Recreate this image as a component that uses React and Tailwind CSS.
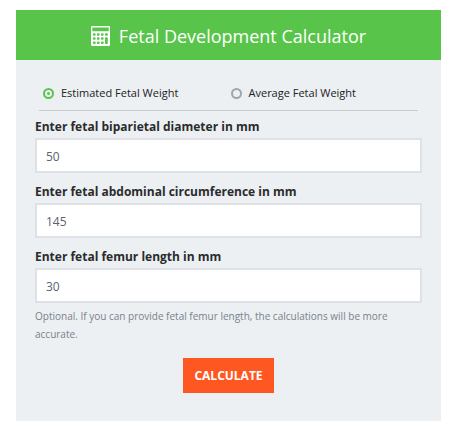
import { useState } from "react";

function CalculatorIcon() {
  return (
    <svg viewBox="0 0 19 20" width="19" height="20" aria-hidden="true">
      <path
        fill="currentColor"
        fillRule="evenodd"
        d="M1.2 0H17.8A1.2 1.2 0 0 1 19 1.2V18.8A1.2 1.2 0 0 1 17.8 20H1.2A1.2 1.2 0 0 1 0 18.8V1.2A1.2 1.2 0 0 1 1.2 0ZM1.3 1.5V5.2H17.7V1.5Z"
      />
      <g fill="#58c54a">
        {[7.2, 11.2, 15.4].map((y) =>
          [2, 6, 10].map((x) => (
            <rect key={x + "-" + y} x={x} y={y} width="2.6" height="2.6" rx="0.8" />
          ))
        )}
        <rect x="14" y="7.2" width="2.8" height="2.6" rx="0.8" />
        <rect x="14" y="11.2" width="2.8" height="6.8" rx="0.8" />
      </g>
    </svg>
  );
}

function Mode({ label, value, mode, onChange }) {
  return (
    <label className="flex flex-1 items-center gap-[7px] text-[11px] text-[#222]">
      <input
        type="radio"
        name="mode"
        value={value}
        checked={mode === value}
        onChange={() => onChange(value)}
        className="grid size-[11px] shrink-0 appearance-none place-items-center rounded-full border-2 border-[#a3a3a8] before:size-[3px] before:rounded-full checked:border-[#58c54a] checked:before:bg-[#58c54a]"
      />
      {label}
    </label>
  );
}

function Field({ id, label, value, describedBy }) {
  return (
    <div>
      <label htmlFor={id} className="block text-xs leading-[22px] font-bold text-[#2b2b2b]">
        {label}
      </label>
      <input
        id={id}
        type="text"
        inputMode="numeric"
        defaultValue={value}
        aria-describedby={describedBy}
        className="block h-[35px] w-full border-2 border-[#dee2e6] bg-white px-[9px] pt-[2px] text-xs text-[#5c636a]"
      />
    </div>
  );
}

export default function App() {
  const [mode, setMode] = useState("estimated");
  return (
    <main className="mt-[10px] mr-[9px] mb-2 ml-4 bg-[#ecf0f3] font-['Open_Sans',sans-serif]">
      <header className="flex h-[50px] items-center justify-center gap-[9px] bg-[#58c54a] pt-[2px] text-white">
        <CalculatorIcon />
        <h1 className="text-lg">Fetal Development Calculator</h1>
      </header>
      <form className="px-[19px] pt-5 pb-7" onSubmit={(e) => e.preventDefault()}>
        <div className="mx-1 mb-[5px] flex h-[31px] border-b border-[#c9cbcd] pb-1 pl-1">
          <Mode label="Estimated Fetal Weight" value="estimated" mode={mode} onChange={setMode} />
          <Mode label="Average Fetal Weight" value="average" mode={mode} onChange={setMode} />
        </div>
        <div className="flex flex-col gap-2">
          <Field id="biparietal" label="Enter fetal biparietal diameter in mm" value="50" />
          <Field id="abdominal" label="Enter fetal abdominal circumference in mm" value="145" />
          <Field id="femur" label="Enter fetal femur length in mm" value="30" describedBy="femur-help" />
        </div>
        <p id="femur-help" className="mt-1 text-[10px] leading-[18px] text-[#7a828a]">
          Optional. If you can provide fetal femur length, the calculations will be more accurate.
        </p>
        <button
          type="submit"
          className="mx-auto mt-[15px] block h-[35px] bg-[#ff5722] px-[11px] text-xs font-bold text-white"
        >
          CALCULATE
        </button>
      </form>
    </main>
  );
}
